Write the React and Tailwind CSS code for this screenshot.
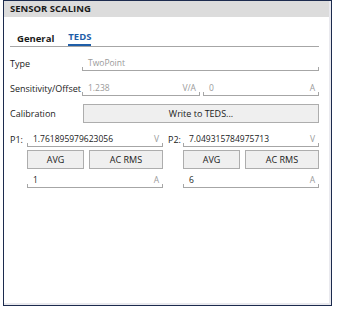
import React from "react";

function Field({ value, unit, dark, className = "" }) {
  return (
    <div className={`flex items-end h-[15px] border-b border-[#a6a6a6] ${className}`}>
      <span className="w-0 h-[3px] border-l border-[#a6a6a6]" />
      <span
        className={`flex-1 pl-[5px] pb-[1px] text-[8.5px] leading-[12px] ${
          dark ? "text-[#1a1a1a]" : "text-[#9a9a9a]"
        }`}
      >
        {value}
      </span>
      {unit && <span className="pr-[3px] pb-[1px] text-[8.5px] leading-[12px] text-[#9a9a9a]">{unit}</span>}
      <span className="w-0 h-[3px] border-l border-[#a6a6a6]" />
    </div>
  );
}

function Btn({ children, className = "" }) {
  return (
    <button className={`h-[19px] bg-[#efefef] border border-[#adadad] text-[9px] text-[#1a1a1a] ${className}`}>
      {children}
    </button>
  );
}

export default function App() {
  return (
    <div
      className="w-[338px] h-[311px] bg-white pl-[3px]"
      style={{ fontFamily: '"Open Sans", "Noto Sans", sans-serif' }}
    >
      <div className="w-[329px] h-[306px] border border-[#1c2b4e] bg-white">
        <div className="h-full border-r-2 border-b-2 border-[#e9e9ee] flex flex-col">
          <div className="h-[16px] bg-[#dcdcdc] pl-[6px] flex items-center text-[9.5px] font-bold text-[#1a1a1a]">
            SENSOR SCALING
          </div>

          <div className="pl-[6px] pr-[10px]">
            <div className="mt-[14px] flex items-end border-b border-[#a6a6a6] h-[16px]">
              <span className="ml-[7px] text-[9.5px] font-bold text-[#1a1a1a] leading-[14px]">General</span>
              <span className="ml-[14px] text-[9.5px] font-bold text-[#1f5ea8] leading-[14px] border-b-2 border-[#1f5ea8]">
                TEDS
              </span>
            </div>

            <div className="mt-[9px] flex items-center">
              <span className="w-[72px] text-[9px] text-[#1a1a1a]">Type</span>
              <Field value="TwoPoint" className="flex-1 text-[9px]" />
            </div>

            <div className="mt-[10px] flex items-center">
              <span className="w-[72px] text-[9px] text-[#1a1a1a]">Sensitivity/Offset</span>
              <Field value="1.238" unit="V/A" className="w-[118px]" />
              <Field value="0" unit="A" className="flex-1 ml-[3px]" />
            </div>

            <div className="mt-[8px] flex items-center">
              <span className="w-[73px] text-[9px] text-[#1a1a1a]">Calibration</span>
              <Btn className="flex-1">Write to TEDS...</Btn>
            </div>

            <div className="mt-[9px] flex items-center">
              <span className="w-[17px] text-[9px] text-[#1a1a1a]">P1:</span>
              <Field value="1.761895979623056" unit="V" dark className="w-[136px]" />
              <span className="ml-[5px] w-[15px] text-[9px] text-[#1a1a1a]">P2:</span>
              <Field value="7.049315784975713" unit="V" dark className="flex-1" />
            </div>

            <div className="mt-[3px] flex">
              <div className="ml-[17px] w-[136px] flex gap-[5px]">
                <Btn className="w-[57px]">AVG</Btn>
                <Btn className="flex-1">AC RMS</Btn>
              </div>
              <div className="ml-[20px] flex-1 flex gap-[5px]">
                <Btn className="w-[57px]">AVG</Btn>
                <Btn className="flex-1">AC RMS</Btn>
              </div>
            </div>

            <div className="mt-[4px] flex">
              <Field value="1" unit="A" dark className="ml-[17px] w-[136px]" />
              <Field value="6" unit="A" dark className="ml-[20px] flex-1" />
            </div>
          </div>
        </div>
      </div>
    </div>
  );
}
